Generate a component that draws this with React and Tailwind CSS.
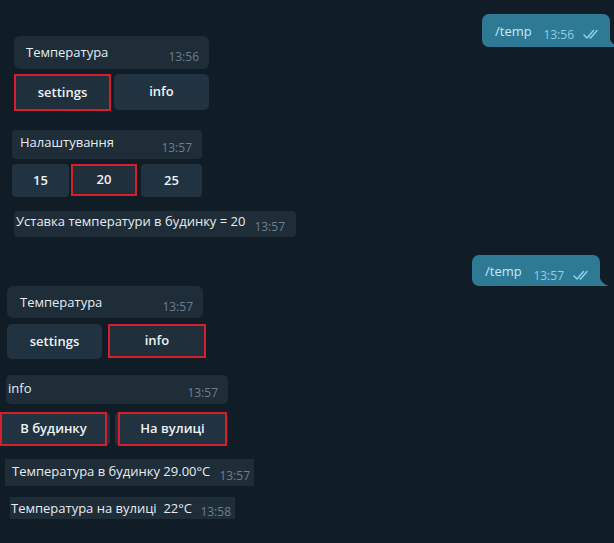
const font = "font-['Open_Sans','Noto_Sans',sans-serif]"

function Checks() {
  return (
    <svg width="17" height="11" viewBox="0 0 17 11" fill="none" className="ml-[9px] mb-[1px]">
      <path d="M1 6 L4 9 L10.5 1.5" stroke="#8fd3ec" strokeWidth="1.4" strokeLinecap="round" strokeLinejoin="round" />
      <path d="M7 8.6 L7.5 9 L14 1.5" stroke="#8fd3ec" strokeWidth="1.4" strokeLinecap="round" strokeLinejoin="round" />
    </svg>
  )
}

function Tail() {
  return (
    <svg width="10" height="11" viewBox="0 0 10 11" className="absolute bottom-0 right-[-9px]">
      <path d="M0 0 C1 6 5 9.5 10 11 L0 11 Z" fill="#2e7a95" />
    </svg>
  )
}

function Out({ className, time }) {
  return (
    <div className={`relative flex items-end rounded-l-[7px] rounded-tr-[7px] bg-[#2e7a95] ${className}`}>
      <span className="self-start text-[13px] leading-[18px] text-[#c3e9f7]">/temp</span>
      <span className="ml-auto flex items-center text-[12px] leading-[14px] text-[#8fcfe7]">
        {time}
        <Checks />
      </span>
      <Tail />
    </div>
  )
}

function Bubble({ className, text, textClass, timeClass, time }) {
  return (
    <div className={`flex bg-[#1e2d38] ${className}`}>
      <span className={`whitespace-pre text-[13px] leading-[18px] text-[#e6ecf0] ${textClass}`}>{text}</span>
      <span className={`ml-auto self-end text-[12px] leading-[14px] text-[#6b7f8d] ${timeClass}`}>{time}</span>
    </div>
  )
}

function Btn({ className, label, red }) {
  return (
    <div
      className={`flex items-center justify-center text-[13px] font-semibold text-[#eef3f6] ${
        red ? 'border-2 border-[#d71f2c] bg-[#1f303c]' : 'rounded-[5px] bg-[#213240]'
      } ${className}`}
    >
      {label}
    </div>
  )
}

export default function App() {
  return (
    <div className={`flex h-[543px] w-[614px] flex-col overflow-hidden bg-[#111d26] ${font}`}>
      <Out className="mt-[14px] mr-[4px] h-[33px] w-[128px] self-end pl-[13px] pr-[10px] pt-[8px] pb-[5px]" time="13:56" />

      <Bubble
        className="mt-[-11px] ml-[14px] h-[33px] w-[195px] rounded-[6px] pl-[12px] pr-[10px]"
        text="Температура"
        textClass="pt-[7px]"
        timeClass="mb-[5px]"
        time="13:56"
      />
      <div className="mt-[5px] ml-[14px] flex items-start gap-[3px]">
        <Btn className="h-[37px] w-[97px]" label="settings" red />
        <Btn className="h-[36px] w-[95px]" label="info" />
      </div>

      <Bubble
        className="mt-[19px] ml-[12px] h-[29px] w-[190px] rounded-[4px] pl-[8px] pr-[10px]"
        text="Налаштування"
        textClass="pt-[3px]"
        timeClass="mb-[4px]"
        time="13:57"
      />
      <div className="mt-[5px] ml-[12px] flex items-start">
        <Btn className="h-[33px] w-[57px] !rounded-[4px]" label="15" />
        <Btn className="ml-[2px] h-[32px] w-[66px]" label="20" red />
        <Btn className="ml-[4px] h-[33px] w-[61px] !rounded-[4px]" label="25" />
      </div>

      <Bubble
        className="mt-[14px] ml-[14px] h-[26px] w-[282px] rounded-[4px] pl-[2px] pr-[11px]"
        text="Уставка температури в будинку = 20"
        textClass="pt-[1px]"
        timeClass="mb-[3px]"
        time="13:57"
      />

      <Out className="mt-[18px] mr-[14px] h-[31px] w-[128px] self-end pl-[13px] pr-[10px] pt-[7px] pb-[3px]" time="13:57" />

      <Bubble
        className="ml-[7px] h-[32px] w-[196px] rounded-[6px] pl-[13px] pr-[10px]"
        text="Температура"
        textClass="pt-[7px]"
        timeClass="mb-[4px]"
        time="13:57"
      />
      <div className="mt-[6px] ml-[7px] flex items-start">
        <Btn className="h-[35px] w-[95px]" label="settings" />
        <Btn className="ml-[6px] h-[34px] w-[98px]" label="info" red />
      </div>

      <Bubble
        className="mt-[16px] ml-[6px] h-[29px] w-[222px] rounded-[5px] pl-[2px] pr-[10px]"
        text="info"
        textClass="pt-[4px]"
        timeClass="mb-[4px]"
        time="13:57"
      />
      <div className="mt-[8px] flex items-start">
        <div className="relative h-[34px] w-[110px] rounded-r-[5px] bg-[#213240]">
          <div className="absolute inset-y-0 left-0 right-[3px] flex items-center justify-center border-2 border-[#d71f2c] text-[13px] font-semibold text-[#eef3f6]">
            В будинку
          </div>
        </div>
        <div className="relative ml-[5px] h-[34px] w-[113px] rounded-[5px] bg-[#213240]">
          <div className="absolute inset-y-0 left-[3px] right-[1px] flex items-center justify-center border-2 border-[#d71f2c] text-[13px] font-semibold text-[#eef3f6]">
            На вулиці
          </div>
        </div>
      </div>

      <Bubble
        className="mt-[13px] ml-[5px] h-[27px] w-[249px] pl-[7px] pr-[4px]"
        text="Температура в будинку 29.00°C"
        textClass="pt-[3px]"
        timeClass="mb-[3px]"
        time="13:57"
      />
      <Bubble
        className="mt-[11px] ml-[10px] h-[22px] w-[225px] pl-[1px] pr-[4px]"
        text="Температура на вулиці  22°C"
        textClass="pt-[2px]"
        timeClass="mb-0"
        time="13:58"
      />
    </div>
  )
}
